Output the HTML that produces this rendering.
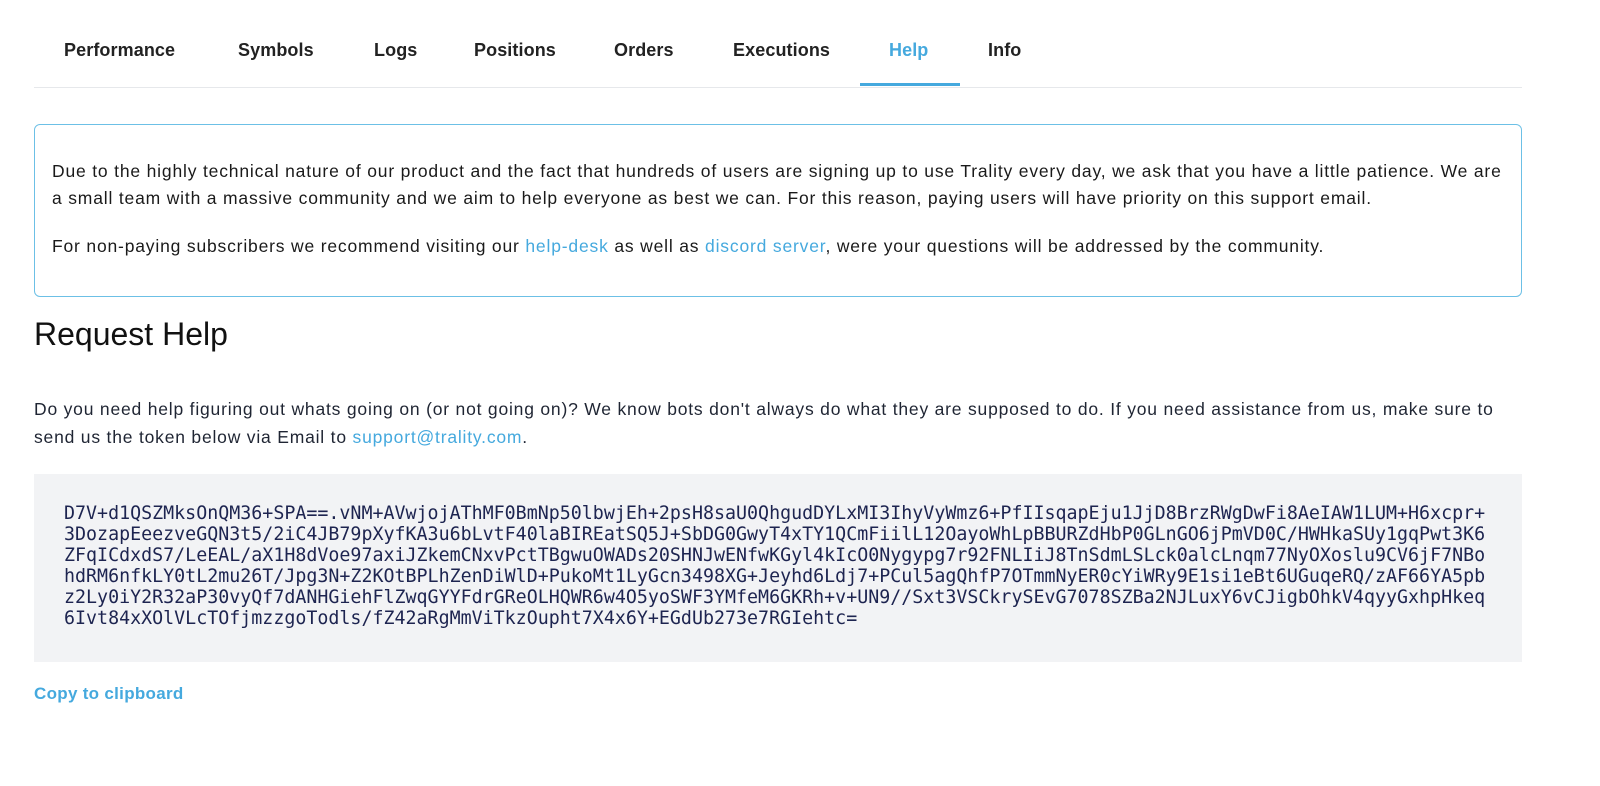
<!DOCTYPE html>
<html><head><meta charset="utf-8"><style>
body{margin:0;background:#fff;font-family:"Liberation Sans",sans-serif;color:#111;width:1600px;height:786px;overflow:hidden;position:relative}
.nav{position:absolute;left:34px;top:0;width:1488px;height:87px;border-bottom:1px solid #e6e8eb}
.tab{position:absolute;top:40px;font-size:18px;font-weight:bold;color:#222;letter-spacing:0.1px}
.tab.on{color:#45a9de}
.ul{position:absolute;left:826px;top:83px;width:100px;height:3px;background:#45a9de}
.box{position:absolute;left:34px;top:124px;width:1486px;height:171px;border:1px solid #6cc0e6;border-radius:6px}
.p{position:absolute;left:17px;font-size:17.5px;letter-spacing:0.82px;color:#1a1a1a;white-space:nowrap}
a{color:#45a9de;text-decoration:none}
h1{position:absolute;left:34px;top:316px;margin:0;font-size:32px;font-weight:normal;color:#111}
.t{position:absolute;left:34px;font-size:17.5px;letter-spacing:0.8px;color:#1f2533;white-space:nowrap}
.code{position:absolute;left:34px;top:474px;width:1488px;height:188px;background:#f2f3f5}
pre{position:absolute;left:30px;top:29px;margin:0;font-family:"DejaVu Sans Mono","Liberation Mono",monospace;font-size:18.4px;line-height:21px;color:#1d2450;transform:scaleX(0.995);transform-origin:0 0}
.copy{position:absolute;left:34px;top:684px;font-size:17px;font-weight:bold;color:#45a9de;letter-spacing:0.3px}
</style></head><body>
<div class="nav">
<span class="tab" style="left:30px">Performance</span>
<span class="tab" style="left:204px">Symbols</span>
<span class="tab" style="left:340px">Logs</span>
<span class="tab" style="left:440px">Positions</span>
<span class="tab" style="left:580px">Orders</span>
<span class="tab" style="left:699px">Executions</span>
<span class="tab on" style="left:855px">Help</span>
<span class="tab" style="left:954px">Info</span>
<div class="ul"></div>
</div>
<div class="box">
<div class="p" style="top:36px">Due to the highly technical nature of our product and the fact that hundreds of users are signing up to use Trality every day, we ask that you have a little patience. We are</div>
<div class="p" style="top:63px">a small team with a massive community and we aim to help everyone as best we can. For this reason, paying users will have priority on this support email.</div>
<div class="p" style="top:111px">For non-paying subscribers we recommend visiting our <a>help-desk</a> as well as <a>discord server</a>, were your questions will be addressed by the community.</div>
</div>
<h1>Request Help</h1>
<div class="t" style="top:399px">Do you need help figuring out whats going on (or not going on)? We know bots don't always do what they are supposed to do. If you need assistance from us, make sure to</div>
<div class="t" style="top:427px">send us the token below via Email to <a>support@trality.com</a>.</div>
<div class="code"><pre>D7V+d1QSZMksOnQM36+SPA==.vNM+AVwjojAThMF0BmNp50lbwjEh+2psH8saU0QhgudDYLxMI3IhyVyWmz6+PfIIsqapEju1JjD8BrzRWgDwFi8AeIAW1LUM+H6xcpr+
3DozapEeezveGQN3t5/2iC4JB79pXyfKA3u6bLvtF40laBIREatSQ5J+SbDG0GwyT4xTY1QCmFiilL12OayoWhLpBBURZdHbP0GLnGO6jPmVD0C/HWHkaSUy1gqPwt3K6
ZFqICdxdS7/LeEAL/aX1H8dVoe97axiJZkemCNxvPctTBgwuOWADs20SHNJwENfwKGyl4kIcO0Nygypg7r92FNLIiJ8TnSdmLSLck0alcLnqm77NyOXoslu9CV6jF7NBo
hdRM6nfkLY0tL2mu26T/Jpg3N+Z2KOtBPLhZenDiWlD+PukoMt1LyGcn3498XG+Jeyhd6Ldj7+PCul5agQhfP7OTmmNyER0cYiWRy9E1si1eBt6UGuqeRQ/zAF66YA5pb
z2Ly0iY2R32aP30vyQf7dANHGiehFlZwqGYYFdrGReOLHQWR6w4O5yoSWF3YMfeM6GKRh+v+UN9//Sxt3VSCkrySEvG7078SZBa2NJLuxY6vCJigbOhkV4qyyGxhpHkeq
6Ivt84xXOlVLcTOfjmzzgoTodls/fZ42aRgMmViTkzOupht7X4x6Y+EGdUb273e7RGIehtc=</pre></div>
<div class="copy">Copy to clipboard</div>
</body></html>
